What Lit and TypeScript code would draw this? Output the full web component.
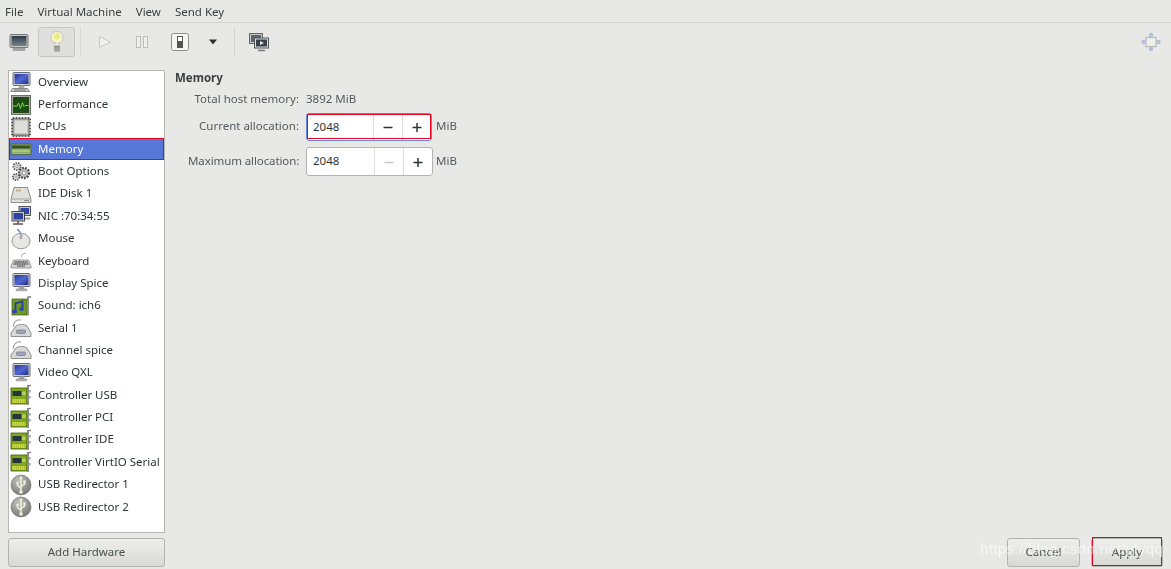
import { LitElement, html, css, svg } from "lit";
import { customElement } from "lit/decorators.js";

const monitor = (base = true) => svg`<svg width="22" height="22" viewBox="0 0 22 22">
  <defs><linearGradient id="scr" x1="0" y1="0" x2="1" y2="1"><stop offset="0" stop-color="#26348f"/><stop offset=".5" stop-color="#5068d4"/><stop offset="1" stop-color="#232f80"/></linearGradient></defs>
  <rect x="3" y="1.500" width="17" height="13" rx="1" fill="#cfcfcf" stroke="#6a6c6d"/>
  <rect x="4.500" y="3" width="14" height="10" fill="url(#scr)"/>
  <path d="M9 14.500h5l.6 2.500H8.400z" fill="#a8a8a8"/>
  ${base
    ? svg`<path d="M2.500 17.500h15l2 3h-19z" fill="#d2d2d2" stroke="#707070" stroke-width=".8"/><path d="M4 19h12" stroke="#666" stroke-width=".9"/>`
    : svg`<rect x="6" y="17" width="11" height="1.800" rx=".6" fill="#b5b5b5" stroke="#7d7d7d" stroke-width=".5"/>`}
</svg>`;

const perf = svg`<svg width="22" height="22" viewBox="0 0 22 22">
  <rect x="1.500" y="1.500" width="19" height="19" fill="#a9aaa6" stroke="#6d6f6b"/>
  <rect x="3" y="3" width="16" height="16" fill="#1f4a14"/>
  <path d="M3 12h4l1.500-3 2 5.500 2-6 1.500 4 1-1h3.500" fill="none" stroke="#63e33c" stroke-width="1"/>
</svg>`;

const cpu = svg`<svg width="22" height="22" viewBox="0 0 22 22">
  <path d="M3.500 1v20M6.500 1v20M9.500 1v20M12.500 1v20M15.500 1v20M18.500 1v20M1 3.500h20M1 6.500h20M1 9.500h20M1 12.500h20M1 15.500h20M1 18.500h20" stroke="#555" stroke-width="1.700"/>
  <rect x="3" y="3" width="16" height="16" rx="1.500" fill="#c5c5c1" stroke="#707070"/>
  <rect x="5" y="5" width="12" height="12" fill="#dededa"/>
</svg>`;

const mem = svg`<svg width="22" height="22" viewBox="0 0 22 22">
  <rect x="1" y="6" width="20" height="10.500" fill="#7fa35c" stroke="#4d5a3f" stroke-width=".7"/>
  <rect x="2" y="7.500" width="18" height="3" fill="#37502b"/>
  <rect x="2" y="11.500" width="18" height="2.800" fill="#a6c87a"/>
  <path d="M2 15.500h18" stroke="#c6b45a" stroke-width="1"/>
</svg>`;

const gears = svg`<svg width="22" height="22" viewBox="0 0 22 22">
  <circle cx="7" cy="5.500" r="3.600" fill="#e2e2e2" stroke="#5a5a5a" stroke-width="1.800" stroke-dasharray="1.500 1"/>
  <circle cx="7" cy="5.500" r="1.200" fill="#fff" stroke="#666" stroke-width=".6"/>
  <circle cx="14" cy="12" r="5" fill="#c5c5c5" stroke="#4e4e4e" stroke-width="2.400" stroke-dasharray="1.800 1.200"/>
  <circle cx="14" cy="12" r="1.800" fill="#fff" stroke="#666" stroke-width=".6"/>
  <circle cx="6" cy="16" r="3.200" fill="#dcdcdc" stroke="#555" stroke-width="1.700" stroke-dasharray="1.400 1"/>
  <circle cx="6" cy="16" r="1" fill="#fff" stroke="#666" stroke-width=".5"/>
</svg>`;

const disk = svg`<svg width="22" height="22" viewBox="0 0 22 22">
  <path d="M4 4.500h13.500l3.500 12v3H1v-3z" fill="#e0e0dd" stroke="#8d8d8a"/>
  <path d="M1.500 16h19" stroke="#a5a5a2"/>
  <rect x="14" y="17" width="5" height="1.200" fill="#8f8f8f"/>
  <path d="M6 7.500h5" stroke="#c9b08a" stroke-width="2"/>
</svg>`;

const nic = svg`<svg width="22" height="22" viewBox="0 0 22 22">
  <rect x="9" y="1.500" width="11.500" height="9" fill="#c5c5c5" stroke="#555"/>
  <rect x="10.500" y="3" width="8.500" height="6" fill="#3047a8"/>
  <rect x="2" y="6.500" width="12.500" height="9.500" fill="#cfcfcf" stroke="#444"/>
  <rect x="3.500" y="8" width="9.500" height="6.500" fill="#2d42a5"/>
  <path d="M3 19h10M8 16v3" stroke="#555" stroke-width="1.500"/>
  <path d="M15 12.500h5v2h-5z" fill="#999"/>
</svg>`;

const mouse = svg`<svg width="22" height="22" viewBox="0 0 22 22">
  <path d="M7 1.500c1.500 0 2 1.500 3.500 3.500" fill="none" stroke="#6a86c9" stroke-width="1.400"/>
  <ellipse cx="11" cy="13" rx="9" ry="7.800" fill="#e6e6e3" stroke="#9c9c98"/>
  <path d="M11 6v5" stroke="#aaa" stroke-width="2.500"/>
</svg>`;

const keyboard = svg`<svg width="22" height="22" viewBox="0 0 22 22">
  <path d="M12 7c-2-3 2-3 4-4" fill="none" stroke="#888" stroke-width=".7"/>
  <path d="M3.500 10h15l2.500 6v2H1v-2z" fill="#d2d2d0" stroke="#8a8a88" stroke-width=".8"/>
  <path d="M4.500 12h13M3.500 14h15" stroke="#4a4d50" stroke-width="1.300" stroke-dasharray="1.200 .5"/>
  <path d="M7 16h8" stroke="#555" stroke-width="1"/>
</svg>`;

const sound = svg`<svg width="22" height="22" viewBox="0 0 22 22">
  <rect x="2" y="4" width="15" height="16" fill="#6d9a22" stroke="#3f5c15" stroke-width=".7"/>
  <path d="M18 1.500v19M18 2h3" stroke="#7d7d7d" stroke-width="1.600" fill="none"/>
  <path d="M5.500 16V8.500l7-2V13" fill="none" stroke="#2a3a9c" stroke-width="1.800"/>
  <ellipse cx="4.500" cy="16.500" rx="2.500" ry="2" fill="#3446b6"/>
  <ellipse cx="11.500" cy="14" rx="2.500" ry="2" fill="#3446b6"/>
</svg>`;

const serial = svg`<svg width="22" height="22" viewBox="0 0 22 22">
  <path d="M3.500 10C3 5 6 2.500 11 3" fill="none" stroke="#aaa" stroke-width="1.300"/>
  <path d="M6 9c2-2 9-2 11 0l4 7v3.500H1V16z" fill="#d8d8d6" stroke="#909090"/>
  <rect x="6.500" y="13" width="9" height="3.500" rx="1" fill="#a0a5bd" stroke="#6d6d6d" stroke-width=".6"/>
</svg>`;

const ctrl = svg`<svg width="22" height="22" viewBox="0 0 22 22">
  <rect x="1" y="4" width="16" height="16" fill="#7ea81e" stroke="#3f5c0e" stroke-width=".8"/>
  <rect x="2.500" y="7" width="9" height="5" fill="#27343c"/>
  <rect x="12" y="7.500" width="3.500" height="3.500" fill="#b9cf62"/>
  <path d="M2.500 17h13" stroke="#eadf45" stroke-width="4" stroke-dasharray="1.300 .7"/>
  <path d="M18 1v20" stroke="#808080" stroke-width="1.800"/>
  <path d="M18 1.500h3" stroke="#808080" stroke-width="1.300"/>
  <rect x="18.800" y="6" width="2" height="2.500" fill="#aaa"/><rect x="18.800" y="12" width="2" height="2.500" fill="#aaa"/>
</svg>`;

const usb = svg`<svg width="22" height="22" viewBox="0 0 22 22">
  <defs><radialGradient id="ub" cx=".4" cy=".3" r=".8"><stop offset="0" stop-color="#c4c4c2"/><stop offset="1" stop-color="#6e6e6b"/></radialGradient></defs>
  <circle cx="11" cy="11" r="10" fill="url(#ub)" stroke="#666663" stroke-width=".6"/>
  <path d="M11 2.500v15.500M11 14.500l-3.500-3V9.500M11 12.500l3.500-2.500V8" fill="none" stroke="#eef2d8" stroke-width="1.500"/>
  <path d="M9.300 4.800L11 2l1.700 2.800z" fill="#eef2d8"/>
  <circle cx="11" cy="18" r="1.800" fill="#eef2d8"/>
  <circle cx="7.500" cy="9" r="1.300" fill="#eef2d8"/>
  <rect x="13.300" y="6.300" width="2.400" height="2.400" fill="#eef2d8"/>
</svg>`;

const items: [string, unknown, boolean?][] = [
  ["Overview", monitor()],
  ["Performance", perf],
  ["CPUs", cpu],
  ["Memory", mem, true],
  ["Boot Options", gears],
  ["IDE Disk 1", disk],
  ["NIC :70:34:55", nic],
  ["Mouse", mouse],
  ["Keyboard", keyboard],
  ["Display Spice", monitor(false)],
  ["Sound: ich6", sound],
  ["Serial 1", serial],
  ["Channel spice", serial],
  ["Video QXL", monitor(false)],
  ["Controller USB", ctrl],
  ["Controller PCI", ctrl],
  ["Controller IDE", ctrl],
  ["Controller VirtIO Serial", ctrl],
  ["USB Redirector 1", usb],
  ["USB Redirector 2", usb],
];

@customElement("app-root")
export class AppRoot extends LitElement {
  static styles = css`
    :host { display: block; height: 100vh; width: 100%; overflow: hidden; position: relative;
      font-family: "Noto Sans", "Open Sans", sans-serif; font-size: 11.500px; color: #2e3436; background: #e8e8e7; }
    .app { display: flex; flex-direction: column; height: 569px; filter: blur(0.45px); }
    .menubar { display: flex; height: 23px; align-items: center; gap: 14px; padding: 0 5px; border-bottom: 1px solid #d3d3d1; flex: none; box-sizing: border-box; color: #3b3f40; }
    .toolbar { display: flex; height: 36px; align-items: center; flex: none; padding-left: 8px; padding-top: 1px; box-sizing: border-box; }
    .tool { display: flex; align-items: center; justify-content: center; flex: none; }
    .t-mon { width: 22px; margin-right: 8px; }
    .t-bulb { width: 35px; height: 28px; border: 1px solid #c6c6c4; border-radius: 3px; background: #dededc; margin-right: 5px; }
    .sep { width: 1px; height: 29px; background: #d6d6d4; flex: none; }
    .t-play { width: 14px; margin-left: 17px; }
    .t-pause { width: 14px; margin-left: 23px; }
    .t-shot { width: 18px; margin-left: 22px; }
    .t-arrow { width: 10px; margin-left: 19px; margin-right: 16px; }
    .t-view { width: 22px; margin-left: 13px; }
    .spacer { flex: 1; }
    .t-full { width: 22px; margin-right: 9px; }
    .body { flex: 1; display: flex; min-height: 0; padding: 11px 8px 2px 8px; gap: 10px; }
    .side { width: 157px; flex: none; display: flex; flex-direction: column; gap: 5px; }
    .list { height: 463px; box-sizing: border-box; background: #fff; border: 1px solid #b6b6b3; overflow: hidden; flex: none; }
    .row { height: 22.370px; display: flex; align-items: center; padding-left: 1px; gap: 6px; box-sizing: border-box; white-space: nowrap; color: #2e3436; }
    .row span { margin-bottom: 2px; }
    .row svg { flex: none; display: block; }
    .row.sel { background: #5677d8; color: #fff; outline: 1.500px solid #e8001c; outline-offset: -1.500px; }
    .main { flex: 1; display: flex; flex-direction: column; min-width: 0; }
    h2 { margin: 0; font-size: 11.500px; font-weight: 700; line-height: 15px; color: #3b3f40; }
    .form { display: grid; grid-template-columns: 111px auto auto; margin: 6px 0 0 13px; column-gap: 7px; align-items: center; justify-content: start; row-gap: 6px; color: #555a5c; line-height: 16px; }
    .lbl { text-align: right; white-space: nowrap; }
    .lbl.up { margin-bottom: 2px; }
    .lbl.tight { letter-spacing: -0.100px; }
    .val { height: 16px; }
    .unit { margin-left: -4px; margin-bottom: 2px; }
    .spin { display: flex; width: 127px; height: 29px; box-sizing: border-box; background: #fff; border: 1px solid #b3b3b0; border-radius: 3px; color: #2e3436; position: relative; }
    .spin.focus { border-color: #6a87dc; height: 28px; width: 126px; }
    .spin.focus::after { content: ""; position: absolute; inset: 0 0 1px 0; border: 1.500px solid #e8001c; pointer-events: none; }
    .num { flex: 1; padding-left: 6px; line-height: 25px; }
    .b { width: 28px; border-left: 1px solid #dededc; display: flex; align-items: center; justify-content: center; flex: none; }
    .b svg { display: block; }
    .foot { margin-top: auto; display: flex; justify-content: flex-end; gap: 11px; }
    button { font: inherit; color: #4a4f50; height: 29px; box-sizing: border-box; border: 1px solid #b3b3b0; border-radius: 3px; background: linear-gradient(#eeeeec, #d8d8d6); padding: 0 0 2px; display: block; }
    .add { width: 157px; }
    .cancel { width: 73px; }
    .apply { width: 72px; position: relative; }
    .apply::after { content: ""; position: absolute; inset: -2px 0 0 0; border: 1.500px solid #e8001c; pointer-events: none; }
    .mark { position: absolute; left: 980px; top: 540px; font: 15px "Liberation Sans", sans-serif; color: rgba(255,255,255,.62); white-space: nowrap; letter-spacing: .35px; pointer-events: none; }
  `;

  render() {
    const minus = (c: string) => html`<svg width="10" height="10" viewBox="0 0 10 10"><path d="M0.500 5.500h9" stroke=${c} stroke-width="1.500"/></svg>`;
    const plus = html`<svg width="10" height="10" viewBox="0 0 10 10"><path d="M0.500 5.500h9M5 1v9" stroke="#2e3436" stroke-width="1.500"/></svg>`;
    return html`<div class="app">
      <div class="menubar"><span>File</span><span>Virtual Machine</span><span>View</span><span>Send Key</span></div>
      <div class="toolbar">
        <div class="tool t-mon"><svg width="22" height="20" viewBox="0 0 22 20">
          <defs><linearGradient id="tm" x1="0" y1="0" x2="0" y2="1"><stop offset="0" stop-color="#2c3a4a"/><stop offset="1" stop-color="#78858f"/></linearGradient></defs>
          <rect x="2" y="2.500" width="18" height="13" rx="1" fill="#c8c8c6" stroke="#777"/>
          <rect x="3.500" y="4" width="15" height="10" fill="url(#tm)"/>
          <rect x="5" y="16" width="12" height="2.500" rx=".5" fill="#a5a5a3" stroke="#888" stroke-width=".5"/>
        </svg></div>
        <div class="tool t-bulb"><svg width="16" height="24" viewBox="0 0 16 24">
          <circle cx="8" cy="7.500" r="6" fill="#f4f4cf" stroke="#c9c9b0"/>
          <circle cx="8" cy="6.500" r="3" fill="#eeec80"/>
          <path d="M6 12v4h4v-4" fill="#e8e8d0" stroke="#bcbcaa" stroke-width=".7"/>
          <rect x="5" y="16" width="6" height="5.500" rx="1" fill="#858583"/>
          <path d="M5 18h6M5 20h6" stroke="#d8d8d8" stroke-width=".7"/>
        </svg></div>
        <div class="sep"></div>
        <div class="tool t-play"><svg width="14" height="14" viewBox="0 0 14 14"><path d="M1.500 1.500L12.500 7 1.500 12.500z" fill="#efefed" stroke="#c9c9c7"/></svg></div>
        <div class="tool t-pause"><svg width="14" height="14" viewBox="0 0 14 14"><rect x="1.500" y="1.500" width="4" height="11" fill="#efefed" stroke="#bdbdbb"/><rect x="8.500" y="1.500" width="4" height="11" fill="#efefed" stroke="#bdbdbb"/></svg></div>
        <div class="tool t-shot"><svg width="18" height="18" viewBox="0 0 18 18"><rect x=".5" y=".5" width="17" height="17" rx="2" fill="#f6f6f5" stroke="#8e8e8c"/><rect x="6.500" y="3.500" width="5" height="11" fill="#fff" stroke="#555"/><rect x="7" y="8" width="4" height="6" fill="#555"/></svg></div>
        <div class="tool t-arrow"><svg width="10" height="6" viewBox="0 0 10 6"><path d="M1 0.500h8L5 5.500z" fill="#2e3436"/></svg></div>
        <div class="sep"></div>
        <div class="tool t-view"><svg width="22" height="20" viewBox="0 0 22 20">
          <rect x="1.500" y="1.500" width="13" height="10" fill="#c9c9c7" stroke="#666"/><rect x="3" y="3" width="10" height="7" fill="#5b6670"/>
          <rect x="6.500" y="6" width="14" height="10" fill="#dededc" stroke="#555"/><rect x="8" y="7.500" width="11" height="7" fill="#39434c"/>
          <path d="M12 9l4 2-4 2z" fill="#e6e6e6"/><path d="M10 18.500h7" stroke="#777" stroke-width="1.500"/>
        </svg></div>
        <div class="spacer"></div>
        <div class="tool t-full"><svg width="22" height="22" viewBox="0 0 22 22">
          <circle cx="11" cy="4" r="2.200" fill="#b4bfdd"/><circle cx="11" cy="18" r="2.200" fill="#b4bfdd"/><circle cx="3.500" cy="11" r="2.200" fill="#b4bfdd"/><circle cx="18.500" cy="11" r="2.200" fill="#b4bfdd"/>
          <rect x="6" y="6.500" width="10" height="9" fill="#f0f0ee" stroke="#bdbdbb" stroke-width="1.300"/>
        </svg></div>
      </div>
      <div class="body">
        <div class="side">
          <div class="list">
            ${items.map(([n, ic, sel]) => html`<div class="row ${sel ? "sel" : ""}">${ic}<span>${n}</span></div>`)}
          </div>
          <button class="add">Add Hardware</button>
        </div>
        <div class="main">
          <h2>Memory</h2>
          <div class="form">
            <div class="lbl">Total host memory:</div><div class="val">3892 MiB</div><div></div>
            <div class="lbl up">Current allocation:</div>
            <div class="spin focus"><div class="num">2048</div><div class="b">${minus("#2e3436")}</div><div class="b">${plus}</div></div>
            <div class="unit">MiB</div>
            <div class="lbl up tight">Maximum allocation:</div>
            <div class="spin"><div class="num">2048</div><div class="b">${minus("#c9c9c7")}</div><div class="b">${plus}</div></div>
            <div class="unit">MiB</div>
          </div>
          <div class="foot"><button class="cancel">Cancel</button><button class="apply">Apply</button></div>
        </div>
      </div>
      </div>
      <div class="mark">https://blog.csdn.net/jjfyqq</div>`;
  }
}
